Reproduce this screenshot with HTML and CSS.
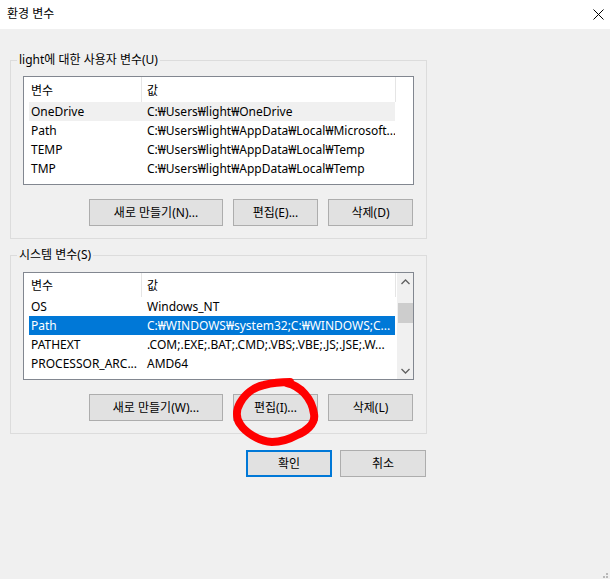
FILE: index.html
```html
<!DOCTYPE html>
<html lang="ko">
<head>
<meta charset="utf-8">
<title>환경 변수</title>
<link rel="stylesheet" href="styles.css">
</head>
<body>
<div class="window">
  <div class="titlebar">
    <span class="title">환경 변수</span>
    <svg class="close" width="11" height="11" viewBox="0 0 11 11"><path d="M0.5 0.5 L10.5 10.5 M10.5 0.5 L0.5 10.5" stroke="#000" stroke-width="1" fill="none"/></svg>
  </div>
  <div class="dialog">
    <fieldset class="group">
      <legend>light에 대한 사용자 변수(U)</legend>
      <div class="group-body">
        <div class="list">
          <div class="list-main">
            <div class="header">
              <div class="hcell c1">변수</div>
              <div class="hcell c2">값</div>
            </div>
            <div class="row hover"><div class="cell c1">OneDrive</div><div class="cell c2">C:₩Users₩light₩OneDrive</div></div>
            <div class="row"><div class="cell c1">Path</div><div class="cell c2">C:₩Users₩light₩AppData₩Local₩Microsoft...</div></div>
            <div class="row"><div class="cell c1">TEMP</div><div class="cell c2">C:₩Users₩light₩AppData₩Local₩Temp</div></div>
            <div class="row"><div class="cell c1">TMP</div><div class="cell c2">C:₩Users₩light₩AppData₩Local₩Temp</div></div>
          </div>
        </div>
        <div class="buttons">
          <button class="btn wide">새로 만들기(N)...</button>
          <button class="btn">편집(E)...</button>
          <button class="btn">삭제(D)</button>
        </div>
      </div>
    </fieldset>

    <fieldset class="group second">
      <legend>시스템 변수(S)</legend>
      <div class="group-body second-body">
        <div class="list short">
          <div class="list-main narrow">
            <div class="header">
              <div class="hcell c1">변수</div>
              <div class="hcell c2">값</div>
            </div>
            <div class="row"><div class="cell c1">OS</div><div class="cell c2">Windows_NT</div></div>
            <div class="row selected"><div class="cell c1">Path</div><div class="cell c2">C:₩WINDOWS₩system32;C:₩WINDOWS;C...</div></div>
            <div class="row"><div class="cell c1">PATHEXT</div><div class="cell c2">.COM;.EXE;.BAT;.CMD;.VBS;.VBE;.JS;.JSE;.W...</div></div>
            <div class="row"><div class="cell c1">PROCESSOR_ARC...</div><div class="cell c2">AMD64</div></div>
          </div>
          <div class="scrollbar">
            <div class="sb-btn">
              <svg width="9" height="6" viewBox="0 0 9 6"><polyline points="0.5,5 4.5,1 8.5,5" fill="none" stroke="#606060" stroke-width="1.3"/></svg>
            </div>
            <div class="sb-track"><div class="sb-thumb"></div></div>
            <div class="sb-btn">
              <svg width="9" height="6" viewBox="0 0 9 6"><polyline points="0.5,1 4.5,5 8.5,1" fill="none" stroke="#606060" stroke-width="1.3"/></svg>
            </div>
          </div>
        </div>
        <div class="buttons">
          <button class="btn wide">새로 만들기(W)...</button>
          <button class="btn">편집(I)...</button>
          <button class="btn">삭제(L)</button>
        </div>
      </div>
    </fieldset>

    <div class="footer">
      <button class="btn ok">확인</button>
      <button class="btn">취소</button>
    </div>
  </div>

  <svg class="annotation" width="610" height="579" viewBox="0 0 610 579">
    <path d="M287 383 C300 386 312 398 314 414 C316 424 305 432 297 435 C288 440 280 442 272 442 C258 441 245 432 240 424 C236 418 236 410 240 403 C245 394 254 387 264 385 C272 383 280 382 290 382" fill="none" stroke="#ff0000" stroke-width="8" stroke-linecap="round" stroke-linejoin="round"/>
  </svg>

  <svg class="grip" width="8" height="6" viewBox="0 0 8 6">
    <rect x="5" y="0" width="2" height="2" fill="#b8b8b8"/>
    <rect x="2" y="3" width="2" height="2" fill="#b8b8b8"/>
    <rect x="5" y="3" width="2" height="2" fill="#b8b8b8"/>
  </svg>
</div>
</body>
</html>
```

FILE: styles.css
```css
* {
  box-sizing: border-box;
}

html, body {
  margin: 0;
  padding: 0;
}

body {
  width: 610px;
  height: 579px;
  overflow: hidden;
  background: #f0f0f0;
  font-family: "Noto Sans", "Noto Sans CJK KR", sans-serif;
  font-size: 12px;
  color: #000;
}

.window {
  position: relative;
  width: 610px;
  height: 579px;
}

.titlebar {
  height: 29px;
  background: #ffffff;
  display: flex;
  align-items: center;
  justify-content: space-between;
  padding: 0 6px 1px 7px;
}

.title {
  font-size: 12px;
  line-height: 16px;
}

.close {
  display: block;
  margin-top: 1px;
}

.dialog {
  padding: 23px 0 0 10px;
}

.group {
  width: 417px;
  margin: 0;
  padding: 0;
  border: 1px solid #dcdcdc;
  min-width: 0;
}

.group.second {
  margin-top: 8px;
}

.group legend {
  margin-left: 6px;
  padding: 0 2px;
  line-height: 16px;
  font-size: 12px;
}

.group-body {
  padding: 8px 12px 12px 12px;
}

.second-body {
  padding-top: 9px;
}

.list {
  height: 109px;
  border: 1px solid #828790;
  background: #ffffff;
  display: flex;
  overflow: hidden;
}

.list.short {
  height: 108px;
}

.list-main {
  flex: 1;
  overflow: hidden;
  min-width: 0;
}

.list-main.narrow {
  flex: 0 0 372px;
  margin-right: 1px;
}

.header {
  display: flex;
  height: 25px;
}

.short .header {
  height: 24px;
}

.hcell {
  display: flex;
  align-items: center;
  height: 100%;
  border-right: 1px solid #e5e5e5;
  white-space: nowrap;
}

.hcell.c1 {
  width: 118px;
  padding-left: 7px;
}

.hcell.c2 {
  width: 254px;
  padding-left: 5px;
}

.row {
  display: flex;
  height: 19px;
  width: 366px;
  margin-left: 5px;
  align-items: center;
  white-space: nowrap;
}

.row.hover {
  background: #f0f0f0;
}

.row.selected {
  background: #0078d7;
  color: #ffffff;
}

.cell {
  overflow: hidden;
}

.cell.c1 {
  width: 112px;
  flex: 0 0 112px;
  padding-left: 2px;
}

.cell.c2 {
  flex: 1;
  padding-left: 6px;
}

.scrollbar {
  width: 17px;
  flex: 0 0 17px;
  background: #f0f0f0;
  display: flex;
  flex-direction: column;
}

.sb-btn {
  height: 17px;
  display: flex;
  align-items: center;
  justify-content: center;
}

.sb-btn svg {
  display: block;
}

.sb-track {
  flex: 1;
  padding-top: 13px;
}

.sb-thumb {
  height: 20px;
  margin: 0 1px;
  background: #cdcdcd;
}

.buttons {
  display: flex;
  justify-content: flex-end;
  gap: 10px;
  margin-top: 14px;
  padding-right: 1px;
}

.btn {
  height: 27px;
  width: 85px;
  background: #e1e1e1;
  border: 1px solid #adadad;
  border-radius: 0;
  font-family: "Noto Sans", "Noto Sans CJK KR", sans-serif;
  font-size: 12px;
  color: #000;
  padding: 0;
  margin: 0;
  line-height: 16px;
}

.btn.wide {
  width: 134px;
}

.footer {
  width: 417px;
  display: flex;
  justify-content: flex-end;
  gap: 8px;
  margin-top: 16px;
  padding-right: 1px;
}

.footer .btn {
  width: 86px;
}

.btn.ok {
  border: 2px solid #0078d7;
}

.annotation {
  position: absolute;
  left: 0;
  top: 0;
  pointer-events: none;
}

.grip {
  position: absolute;
  right: 1px;
  bottom: 0;
}
```
